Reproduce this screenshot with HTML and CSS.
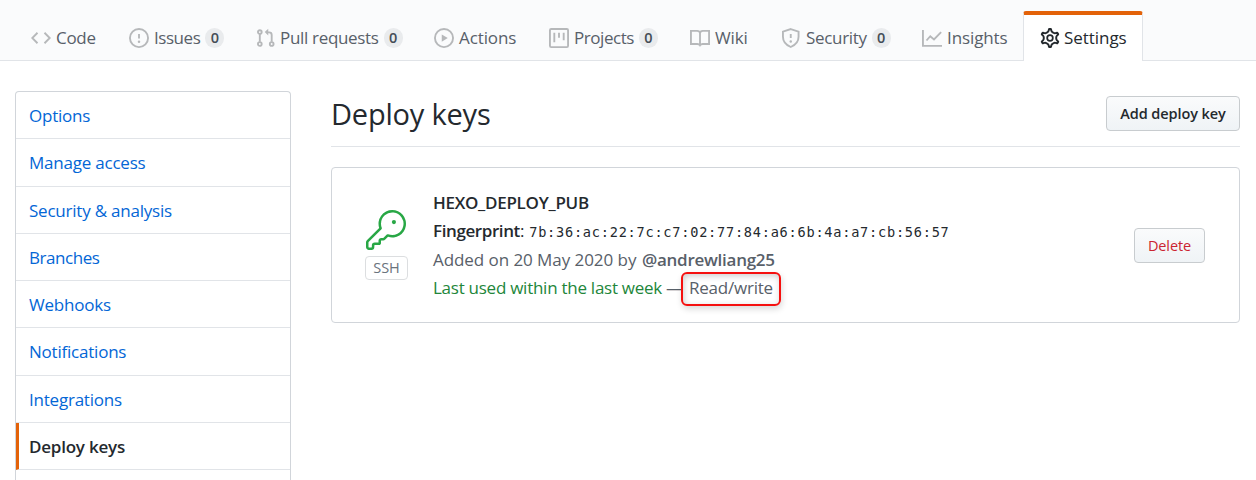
FILE: index.html
```html
<!DOCTYPE html>
<html lang="en">
<head>
<meta charset="utf-8">
<title>Deploy keys</title>
<link rel="stylesheet" href="styles.css">
</head>
<body>
<nav class="tabs">
  <a class="tab"><svg class="icon" viewBox="0 0 16 16"><path d="M5.2 3.8 1 8l4.200 4.200M10.800 3.800 15 8l-4.200 4.200"/></svg><span class="label">Code</span></a>
  <a class="tab"><svg class="icon" viewBox="0 0 16 16"><circle cx="8" cy="8" r="7.250"/><path d="M8 4.700v3.600"/><circle class="solid" cx="8" cy="11" r="1"/></svg><span class="label tight">Issues</span><span class="count">0</span></a>
  <a class="tab"><svg class="icon narrow" viewBox="1 0 16 16"><circle cx="3.250" cy="3.250" r="1.500"/><circle cx="3.250" cy="12.750" r="1.500"/><circle cx="12.750" cy="12.750" r="1.500"/><path d="M3.250 5v6M12.750 11V5.500a2 2 0 0 0-2-2H8.500"/><path class="solid" d="M7.200 3.250 10 .6v5.300z"/></svg><span class="label">Pull requests</span><span class="count">0</span></a>
  <a class="tab"><svg class="icon" viewBox="0 0 16 16"><circle cx="8" cy="8" r="7.250"/><path class="solid" d="M6.200 5.100v5.800L11 8z"/></svg><span class="label wide">Actions</span></a>
  <a class="tab"><svg class="icon" viewBox="0 0 16 16"><rect x=".75" y=".75" width="14.500" height="14.500" rx="1"/><path d="M4.250 3.800v7.600M8 3.800v4M11.750 3.800v6"/></svg><span class="label tight">Projects</span><span class="count">0</span></a>
  <a class="tab"><svg class="icon" viewBox="0 0 16 16"><path d="M8 4.200c0-1.200-1-1.950-2.250-1.950h-5v10.500h5.100c1 0 1.700.4 2.150 1.100.45-.7 1.150-1.100 2.150-1.100h5.100V2.250h-5C9 2.250 8 3 8 4.200zM8 4v9.500"/></svg><span class="label wide">Wiki</span></a>
  <a class="tab"><svg class="icon shield" viewBox="1 0 16 16"><path d="M8 .85 14.250 2.900V7c0 3.800-2.500 6.600-6.250 8.200C4.250 13.600 1.750 10.800 1.750 7V2.900zM8 4.700v3.300"/><circle class="solid" cx="8" cy="10.700" r="1"/></svg><span class="label">Security</span><span class="count">0</span></a>
  <a class="tab"><svg class="icon" viewBox="0 0 16 16"><path d="M.75 1.500v12.750H16M3.600 10l3-3.400 3 2.600 5.700-5.900"/></svg><span class="label wide">Insights</span></a>
  <a class="tab selected"><svg class="icon" viewBox="0 0 16 16"><path transform="translate(8 8) scale(1.110) translate(-8 -8)" d="M7.429 1.525a6.593 6.593 0 011.142 0c.036.003.108.036.137.146l.289 1.105c.147.56.55.967.997 1.189.174.086.341.183.501.29.417.278.97.423 1.53.27l1.102-.303c.11-.03.175.016.195.046.219.31.41.641.573.989.014.031.022.11-.059.19l-.815.806c-.411.406-.562.957-.53 1.456a4.588 4.588 0 010 .582c-.032.499.119 1.05.53 1.456l.815.806c.08.08.073.159.059.19a6.494 6.494 0 01-.573.99c-.02.029-.086.074-.195.045l-1.103-.303c-.559-.153-1.112-.008-1.529.27-.16.107-.327.204-.5.29-.449.222-.851.628-.998 1.189l-.289 1.105c-.029.11-.101.143-.137.146a6.613 6.613 0 01-1.142 0c-.036-.003-.108-.037-.137-.146l-.289-1.105c-.147-.56-.55-.967-.997-1.189a4.502 4.502 0 01-.501-.29c-.417-.278-.97-.423-1.53-.27l-1.102.303c-.11.03-.175-.016-.195-.046a6.492 6.492 0 01-.573-.989c-.014-.031-.022-.11.059-.19l.815-.806c.411-.406.562-.957.53-1.456a4.587 4.587 0 010-.582c.032-.499-.119-1.05-.53-1.456l-.815-.806c-.08-.08-.073-.159-.059-.19a6.44 6.44 0 01.573-.99c.02-.029.086-.075.195-.045l1.103.303c.559.153 1.112.008 1.529-.27.16-.107.327-.204.5-.29.449-.222.851-.628.998-1.189l.289-1.105c.029-.11.101-.143.137-.146z"/><circle cx="8" cy="8" r="2.250"/></svg><span class="label">Settings</span></a>
</nav>
<div class="layout">
  <aside class="menu">
    <a class="item">Options</a>
    <a class="item">Manage access</a>
    <a class="item">Security &amp; analysis</a>
    <a class="item tight">Branches</a>
    <a class="item">Webhooks</a>
    <a class="item">Notifications</a>
    <a class="item">Integrations</a>
    <a class="item current">Deploy keys</a>
  </aside>
  <main class="content">
    <header class="heading">
      <h1 class="title">Deploy keys</h1>
      <button class="btn add">Add deploy key</button>
    </header>
    <section class="card">
      <div class="keytype">
        <svg class="key" viewBox="0 0 24 24"><circle cx="16.750" cy="7.250" r="1.250"/><path fill-rule="evenodd" d="M15.750 0a8.250 8.250 0 00-7.851 10.790L.513 18.178A1.750 1.750 0 000 19.414v2.836C0 23.217.784 24 1.750 24h1.500A1.750 1.750 0 005 22.250v-1a.25.25 0 01.25-.25h2.735a.75.75 0 00.545-.22l.214-.213A.875.875 0 009 19.948V18.500a.25.25 0 01.25-.25h1.086c.464 0 .91-.184 1.237-.513l1.636-1.636A8.250 8.250 0 1015.750 0zM9 8.250a6.750 6.750 0 114.288 6.287.75.75 0 00-.804.168l-1.971 1.972a.25.25 0 01-.177.073H9.250A1.750 1.750 0 007.500 18.500v1H5.250a1.750 1.750 0 00-1.750 1.750v1a.25.25 0 01-.25.25h-1.500a.25.25 0 01-.25-.25v-2.836a.25.25 0 01.073-.177l7.722-7.721a.75.75 0 00.168-.804A6.730 6.730 0 019 8.250z"/></svg>
        <span class="ssh">SSH</span>
      </div>
      <div class="details">
        <div class="row name">HEXO_DEPLOY_PUB</div>
        <div class="row"><span class="strong">Fingerprint</span>:<code class="hash">7b:36:ac:22:7c:c7:02:77:84:a6:6b:4a:a7:cb:56:57</code></div>
        <div class="row muted"><span class="added">Added on 20 May 2020 by</span><span class="strong">@andrewliang25</span></div>
        <div class="row muted"><span class="used">Last used within the last week</span><span class="dash">—</span><span class="access">Read/write</span></div>
      </div>
      <button class="btn delete">Delete</button>
    </section>
  </main>
</div>
</body>
</html>
```
FILE: styles.css
```css
* { box-sizing: border-box; }
body {
  margin: 0;
  height: 480px;
  overflow: hidden;
  background: #fff;
  color: #24292e;
  font: 17px/28px "Open Sans", "Noto Sans", sans-serif;
  letter-spacing: -0.220px;
}
.tabs {
  display: grid;
  grid-template-columns: 98px 128px 177px 115px 141px 92px 140px 117px 120px;
  height: 61px;
  padding: 11px 0 0 15px;
  background: #fafbfc;
  border-bottom: 1px solid #e1e4e8;
}
.tab {
  display: flex;
  align-items: center;
  height: 50px;
  padding: 4px 0 0 16px;
  color: #586069;
  white-space: nowrap;
}
.tab.selected {
  padding: 0 0 0 16px;
  background: #fff;
  border: 1px solid #e1e4e8;
  border-top: 4px solid #e36209;
  border-bottom: 0;
  border-radius: 3px 3px 0 0;
  color: #24292e;
}
.label { letter-spacing: -0.320px; }
.selected .label { letter-spacing: -0.050px; }
.tight, .label.tight { letter-spacing: -0.450px; }
.label.wide { letter-spacing: -0.100px; }
.icon {
  flex: none;
  width: 20px;
  height: 20px;
  margin-right: 5px;
  fill: none;
  stroke: #b6b8ba;
  stroke-width: 1.5;
}
.icon.narrow { margin-right: 3px; }
.icon.shield { margin-right: 4px; }
.selected .icon { stroke: #24292e; stroke-width: 1.4; margin-right: 4px; }
.icon .solid { fill: #b6b8ba; stroke: none; }
.count {
  width: 19px;
  height: 20px;
  margin-left: 5px;
  border-radius: 10px;
  background: #e9ebed;
  color: #444d56;
  font-size: 14.500px;
  font-weight: 600;
  line-height: 20px;
  letter-spacing: 0;
  text-align: center;
}
.layout {
  display: grid;
  grid-template-columns: 276px 909px;
  column-gap: 40px;
  padding: 30px 0 0 15px;
}
.menu {
  border: 1px solid #d1d5da;
  border-bottom: 0;
  border-radius: 4px 4px 0 0;
  height: 389px;
}
.item {
  display: block;
  height: 47.250px;
  padding: 10px 13px;
  border-bottom: 1px solid #e1e4e8;
  color: #0366d6;
  line-height: 27px;
}
.item.current {
  padding-left: 10px;
  border-left: 3px solid #e36209;
  color: #24292e;
  font-weight: 600;
}
.heading {
  display: flex;
  justify-content: space-between;
  height: 56px;
  border-bottom: 1px solid #e1e4e8;
}
.title {
  margin: 0;
  font-size: 29px;
  font-weight: 400;
  line-height: 46px;
  letter-spacing: -0.200px;
}
.btn {
  height: 35px;
  border: 1px solid #c8cccf;
  border-radius: 4px;
  background: linear-gradient(#fafbfc, #eff3f6);
  color: #24292e;
  font: 600 14.500px/20px "Open Sans", sans-serif;
  padding: 0;
  letter-spacing: -0.100px;
}
.add { width: 134px; margin-top: 5px; }
.delete { width: 71px; color: #cb2431; margin: 60px 34px 0 auto; font-weight: 500; }
.card {
  display: flex;
  height: 156px;
  margin-top: 20px;
  border: 1px solid #d1d5da;
  border-radius: 4px;
}
.keytype {
  display: flex;
  flex-direction: column;
  width: 43px;
  margin: 42px 25px 0 33px;
}
.key { width: 40px; height: 40px; margin-left: 1px; fill: #28a745; }
.ssh {
  width: 43px;
  height: 24px;
  margin-top: 6px;
  border: 1px solid #dcdee0;
  border-radius: 4px;
  color: #6a737d;
  font-size: 14.500px;
  line-height: 21px;
  letter-spacing: -0.100px;
  text-align: center;
}
.details { padding-top: 21px; }
.row { display: flex; height: 28.400px; line-height: 28.400px; white-space: nowrap; }
.name, .strong { font-weight: 600; }
.name { letter-spacing: -0.280px; }
.strong { letter-spacing: -0.400px; }
.muted { color: #586069; }
.hash {
  margin-left: 5px;
  font: 13.600px/30px "DejaVu Sans Mono", monospace;
  letter-spacing: 0.760px;
}
.muted .strong { letter-spacing: -0.270px; }
.added { width: 209px; letter-spacing: -0.060px; }
.used { width: 233px; color: #22863a; letter-spacing: -0.260px; }
.dash { width: 15px; }
.access {
  width: 100px;
  height: 34px;
  margin-top: -2px;
  padding: 0 0 0 6px;
  border: 2px solid #f5100f;
  border-radius: 6px;
  line-height: 27px;
  box-shadow: 1px 3px 6px rgba(0, 0, 0, .15), inset 1px 2px 6px rgba(0, 0, 0, .2);
}
```
